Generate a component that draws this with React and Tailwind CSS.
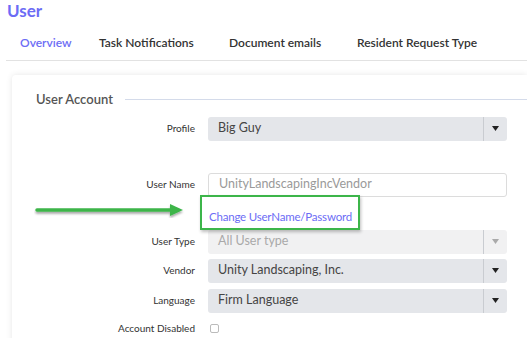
import { useState } from 'react';

function Select({ value, disabled }) {
    return (
        <div
            className={`flex h-[24px] w-[299px] items-center rounded-[3px] ${
                disabled ? 'bg-[#f1f1f2] text-[#a9a9a9]' : 'bg-[#e4e6ea] text-[#444]'
            }`}
        >
            <span className="flex-1 pl-[10px] text-[12.5px]">{value}</span>
            <span className="flex h-full w-[24px] items-center justify-center border-l border-[#c9ccd1]">
                <svg width="7" height="5" viewBox="0 0 7 5">
                    <path d="M0 0h7L3.5 5z" fill={disabled ? '#aaa' : '#222'} />
                </svg>
            </span>
        </div>
    );
}

function Row({ label, children, className = '' }) {
    return (
        <div className={`flex items-center ${className}`}>
            <div className="w-[196px] shrink-0 whitespace-nowrap pr-[13px] text-right text-[10px] text-[#333]">{label}</div>
            {children}
        </div>
    );
}

export default function App() {
    const [disabled, setDisabled] = useState(false);
    const tabs = [
        { name: 'Overview', w: 'w-[79px] text-[#6c6cf5]' },
        { name: 'Task Notifications', w: 'w-[130px]' },
        { name: 'Document emails', w: 'w-[128px]' },
        { name: 'Resident Request Type', w: '' },
    ];

    return (
        <div className="h-[338px] w-[527px] overflow-hidden bg-white" style={{ fontFamily: 'Lato, "Open Sans", sans-serif' }}>
            {/* Title */}
            <h1 className="pl-[7px] pt-[1px] text-[17px] font-bold leading-[20px] text-[#6c6cf5]">User</h1>

            {/* Tabs */}
            <div className="ml-[6px] mt-[15px] flex whitespace-nowrap border-b border-[#e2e2e2] pb-[10px] pl-[14px] text-[12px] font-semibold leading-[14px] text-[#333]">
                {tabs.map((t) => (
                    <span key={t.name} className={`shrink-0 ${t.w}`}>
                        {t.name}
                    </span>
                ))}
            </div>

            {/* Card */}
            <div className="relative ml-[12px] mt-[14px] h-[300px] rounded-tl-[4px] bg-white pt-[15px] shadow-[0_0_6px_rgba(0,0,0,0.1)]">
                <div className="flex items-center pl-[24px]">
                    <span className="text-[13px] font-semibold text-[#555]">User Account</span>
                    <span className="ml-[12px] h-px flex-1 bg-[#d4dbea]" />
                </div>

                <Row label="Profile" className="mt-[7px]">
                    <Select value="Big Guy" />
                </Row>

                <Row label="User Name" className="mt-[32px]">
                    <div className="flex h-[24px] w-[299px] items-center rounded-[3px] border border-[#dcdcdc] pl-[10px] text-[12.5px] text-[#9a9a9a]">
                        UnityLandscapingIncVendor
                    </div>
                </Row>

                <div className="flex h-[33px] items-start pl-[197px] pt-[13px]">
                    <a href="#" className="text-[11.5px] leading-[14px] tracking-[-0.2px] text-[#6c6cf5]">Change UserName/Password</a>
                </div>

                <Row label="User Type">
                    <Select value="All User type" disabled />
                </Row>
                <Row label="Vendor" className="mt-[5px]">
                    <Select value="Unity Landscaping, Inc." />
                </Row>
                <Row label="Language" className="mt-[6px]">
                    <Select value="Firm Language" />
                </Row>
                <Row label="Account Disabled" className="mt-[8px]">
                    <input
                        type="checkbox"
                        checked={disabled}
                        onChange={(e) => setDisabled(e.target.checked)}
                        className="ml-[2px] h-[9px] w-[9px] appearance-none rounded-[2px] border border-[#bbb] bg-white"
                    />
                </Row>

                {/* Annotation: arrow + highlight box */}
                <div className="absolute left-[188px] top-[120px] h-[35px] w-[160px] border-[2.5px] border-[#3cb54a] shadow-[1px_2px_3px_rgba(0,0,0,0.25)]" />
                <svg className="absolute left-[22px] top-[129px]" width="152" height="14" viewBox="0 0 152 14">
                    <defs>
                        <filter id="sh" x="-5%" y="-50%" width="110%" height="250%">
                            <feDropShadow dx="0" dy="2" stdDeviation="1.2" floodColor="#000" floodOpacity="0.35" />
                        </filter>
                    </defs>
                    <g filter="url(#sh)">
                        <line x1="3" y1="6" x2="138" y2="6" stroke="#3cb54a" strokeWidth="3.5" strokeLinecap="round" />
                        <path d="M136 0L149 6L136 12z" fill="#3cb54a" />
                    </g>
                </svg>
            </div>
        </div>
    );
}
